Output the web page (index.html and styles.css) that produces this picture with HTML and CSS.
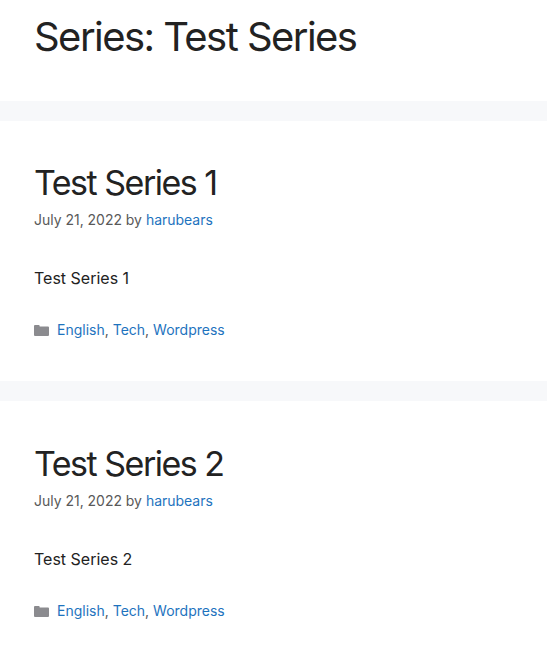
FILE: index.html
```html
<!DOCTYPE html>
<html lang="en">
<head>
    <meta charset="UTF-8">
    <meta name="viewport" content="width=device-width, initial-scale=1.0">
    <title>Series: Test Series</title>
    <link rel="stylesheet" href="styles.css">
</head>
<body>
    <main class="site-main">
        <header class="page-header">
            <h1 class="page-title">Series: Test Series</h1>
        </header>
        <article class="post">
            <h2 class="entry-title">Test Series 1</h2>
            <div class="entry-meta">July 21, 2022 by <a href="#">harubears</a></div>
            <p class="entry-content">Test Series 1</p>
            <footer class="entry-footer">
                <svg class="folder-icon" viewBox="0 0 15 11"><path d="M0 1Q0 0 1 0H4.7Q5.7 0 5.7 1.4H14Q15 1.4 15 2.4V10Q15 11 14 11H1Q0 11 0 10Z"/></svg>
                <span class="cat-links"><a href="#">English</a>, <a href="#">Tech</a>, <a href="#">Wordpress</a></span>
            </footer>
        </article>
        <article class="post">
            <h2 class="entry-title">Test Series 2</h2>
            <div class="entry-meta">July 21, 2022 by <a href="#">harubears</a></div>
            <p class="entry-content">Test Series 2</p>
            <footer class="entry-footer">
                <svg class="folder-icon" viewBox="0 0 15 11"><path d="M0 1Q0 0 1 0H4.7Q5.7 0 5.7 1.4H14Q15 1.4 15 2.4V10Q15 11 14 11H1Q0 11 0 10Z"/></svg>
                <span class="cat-links"><a href="#">English</a>, <a href="#">Tech</a>, <a href="#">Wordpress</a></span>
            </footer>
        </article>
    </main>
</body>
</html>
```

FILE: styles.css
```css
body {
    margin: 0;
    background-color: #f7f8fa;
    color: #222;
    font-family: Inter, "Liberation Sans", sans-serif;
    overflow: hidden;
}
a {
    color: #1e73be;
    text-decoration: none;
}
.site-main {
    display: flex;
    flex-direction: column;
    gap: 20px;
}
.page-header {
    height: 100.7px;
    padding: 12px 34px 0;
    box-sizing: border-box;
    background-color: #fff;
}
.page-title {
    margin: 0;
    font-size: 40px;
    font-weight: 400;
    line-height: 50px;
    letter-spacing: -1.55px;
}
.post {
    height: 260.7px;
    padding: 41.4px 34px 0;
    box-sizing: border-box;
    background-color: #fff;
}
.entry-title {
    margin: 0;
    font-size: 34px;
    font-weight: 400;
    line-height: 42px;
    letter-spacing: -1.5px;
}
.entry-meta {
    margin-top: 5.3px;
    color: #595959;
    font-size: 14px;
    line-height: 22px;
    letter-spacing: -0.02px;
}
.entry-content {
    margin: 34px 0 0;
    font-size: 16px;
    line-height: 26px;
}
.entry-footer {
    display: flex;
    align-items: center;
    margin-top: 28px;
    color: #595959;
    font-size: 14px;
    line-height: 22px;
}
.folder-icon {
    width: 15px;
    height: 11px;
    margin-right: 8px;
    fill: #8b8b8f;
}
```
